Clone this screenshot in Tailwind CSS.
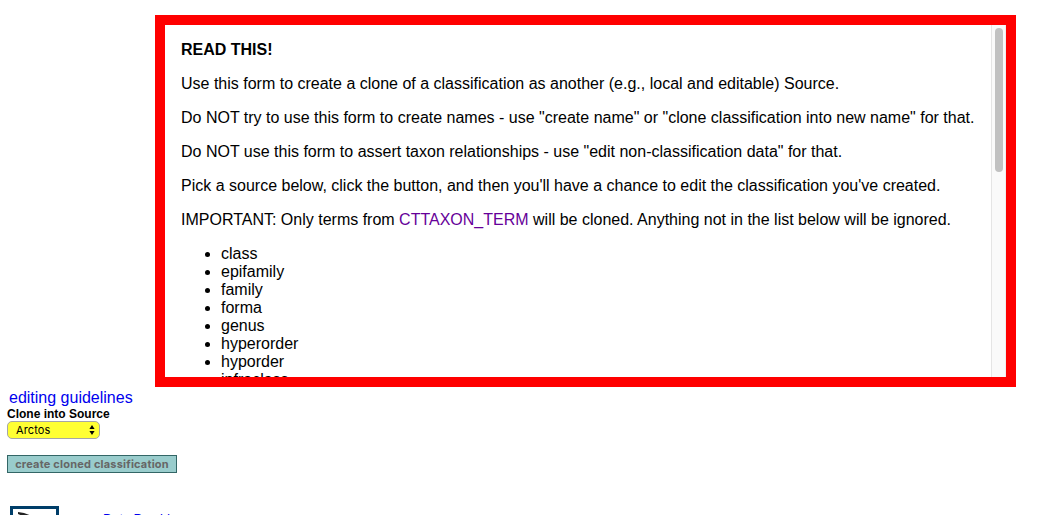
<!DOCTYPE html>
<html lang="en"><head><meta charset="utf-8"><title>Clone classification</title>
<script src="https://cdn.jsdelivr.net/npm/@tailwindcss/browser@4"></script></head>
<body class="h-[515px] overflow-hidden bg-white text-black font-['Liberation_Sans',Arial,sans-serif]">
<main class="pt-[15px]">
<section class="ml-[155px] flex h-[372px] w-[861px] border-10 border-[#ff0000] text-[16px] leading-[18px]">
<div class="h-full flex-1 overflow-hidden pl-4 pt-4 whitespace-nowrap">
<p class="mb-4 font-bold">READ THIS!</p>
<p class="mb-4">Use this form to create a clone of a classification as another (e.g., local and editable) Source.</p>
<p class="mb-4">Do NOT try to use this form to create names - use "create name" or "clone classification into new name" for that.</p>
<p class="mb-4">Do NOT use this form to assert taxon relationships - use "edit non-classification data" for that.</p>
<p class="mb-4">Pick a source below, click the button, and then you'll have a chance to edit the classification you've created.</p>
<p class="mb-4">IMPORTANT: Only terms from <a class="text-[#660099]">CTTAXON_TERM</a> will be cloned. Anything not in the list below will be ignored.</p>
<ul class="list-disc pl-10"><li>class</li><li>epifamily</li><li>family</li><li>forma</li><li>genus</li><li>hyperorder</li><li>hyporder</li><li>infraclass</li></ul>
</div>
<div class="h-full w-[15px] border-x border-l-[#e5e5e5] border-r-[#eeeeee] bg-[#fafafa] pl-[3px] pt-[3px]"><div class="h-[144px] w-2 rounded-full bg-[#c1c1c1]"></div></div>
</section>
<div class="pl-[9px] pt-[2px] text-[16px] leading-[18px] text-[#0000ee]">editing guidelines</div>
<div class="pl-[7px] text-[12px] leading-[14px] font-bold">Clone into Source</div>
<div class="ml-[7px] flex h-[18px] w-[93px] items-center justify-between rounded-[5px] border border-[#a6a6a6] bg-[#ffff33] pl-2 pr-1 font-[Inter,sans-serif] text-[11px] tracking-[0.1px]"><span>Arctos</span>
<svg width="6" height="10" viewBox="0 0 6 10"><path d="M3 0 5.6 4H.4zM3 10 .4 6h5.2z"/></svg></div>
<div class="mt-4 ml-[7px] flex h-[18px] w-[170px] items-center justify-center border border-[#336666] bg-[#99cccc] font-[Inter,sans-serif] text-[11px] font-bold tracking-[0.2px] whitespace-nowrap text-[#666]">create cloned classification</div>
<footer class="mt-[33px] flex h-[9px] items-start overflow-hidden pl-[10px]">
<svg width="49" height="44" viewBox="0 0 49 44" class="shrink-0"><path fill="#fff" stroke="#003e69" stroke-width="3" d="M1.5 1.5h46v41h-46z"/><path fill="#222" d="M8 6 14 7 22 10v4L8 8z"/></svg>
<a class="ml-11 mt-[5px] text-[13px] leading-[15px] tracking-[-0.1px] text-[#0000ee]">Data Providers</a>
</footer>
</main>
</body></html>
